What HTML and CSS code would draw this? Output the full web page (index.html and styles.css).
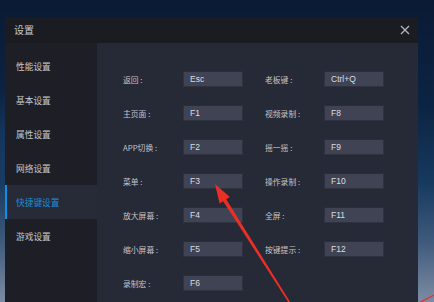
FILE: index.html
```html
<!DOCTYPE html>
<html lang="zh-CN">
<head>
<meta charset="utf-8">
<title>设置</title>
<link rel="stylesheet" href="styles.css">
</head>
<body>
<div class="dialog">
  <div class="titlebar">
    <span class="title">设置</span>
    <svg class="close" width="10" height="10" viewBox="0 0 10 10"><path d="M1 1L9 9M9 1L1 9" stroke="#b4b6bc" stroke-width="1.3" fill="none"/></svg>
  </div>
  <div class="body">
    <ul class="sidebar">
      <li class="nav">性能设置</li>
      <li class="nav">基本设置</li>
      <li class="nav">属性设置</li>
      <li class="nav">网络设置</li>
      <li class="nav active">快捷键设置</li>
      <li class="nav">游戏设置</li>
    </ul>
    <div class="content">
      <div class="col">
        <div class="row"><span class="label">返回 :</span><span class="key">Esc</span></div>
        <div class="row"><span class="label">主页面 :</span><span class="key">F1</span></div>
        <div class="row"><span class="label">APP切换 :</span><span class="key">F2</span></div>
        <div class="row"><span class="label">菜单 :</span><span class="key">F3</span></div>
        <div class="row"><span class="label">放大屏幕 :</span><span class="key">F4</span></div>
        <div class="row"><span class="label">缩小屏幕 :</span><span class="key">F5</span></div>
        <div class="row"><span class="label">录制宏 :</span><span class="key">F6</span></div>
      </div>
      <div class="col">
        <div class="row"><span class="label">老板键 :</span><span class="key">Ctrl+Q</span></div>
        <div class="row"><span class="label">视频录制 :</span><span class="key">F8</span></div>
        <div class="row"><span class="label">摇一摇 :</span><span class="key">F9</span></div>
        <div class="row"><span class="label">操作录制 :</span><span class="key">F10</span></div>
        <div class="row"><span class="label">全屏 :</span><span class="key">F11</span></div>
        <div class="row"><span class="label">按键提示 :</span><span class="key">F12</span></div>
      </div>
    </div>
  </div>
</div>
<svg class="arrow" width="434" height="302" viewBox="0 0 434 302">
  <polygon fill="#ea2f27" points="215,184 229.8,197 226.2,199.2 290.8,303 289.2,303.6 223.2,201.2 219.6,203.4"/>
  <polygon fill="#ea2f27" points="419,302 434,294.5 434,295.8 421,302.5"/>
</svg>
</body>
</html>
```
FILE: styles.css
```css
html, body {
  margin: 0;
  padding: 0;
}
body {
  width: 434px;
  height: 302px;
  overflow: hidden;
  position: relative;
  background:
    radial-gradient(circle at 30px 140px, rgba(40,90,150,0.35), transparent 60px),
    linear-gradient(180deg, #0a1a34 0%, #0c2443 35%, #16395e 60%, #3e5a7c 80%, #7d8ca4 100%);
  font-family: "Noto Sans CJK SC", "Noto Sans", sans-serif;
}
.dialog {
  margin: 17px 0 0 5px;
  width: 413px;
  height: 300px;
  display: flex;
  flex-direction: column;
}
.titlebar {
  height: 26px;
  flex: none;
  background: #1b1c21;
  display: flex;
  align-items: center;
  justify-content: space-between;
  padding: 0 8px 0 9px;
}
.title {
  color: #c9cacf;
  font-size: 10px;
  line-height: 12px;
}
.close {
  display: block;
}
.body {
  flex: 1;
  display: flex;
}
.sidebar {
  list-style: none;
  margin: 0;
  padding: 6px 0 0;
  width: 92px;
  background: #1e1f26;
}
.nav {
  height: 34px;
  display: flex;
  align-items: center;
  color: #c6c7cc;
  font-size: 8.7px;
  border-left: 2px solid transparent;
  box-sizing: border-box;
  padding-left: 9px;
}
.nav.active {
  background: #272a37;
  border-left-color: #0f8fe4;
  color: #1b8cd8;
}
.content {
  flex: 1;
  background: #262936;
  padding: 28px 0 0 26px;
  display: flex;
  gap: 22px;
}
.col {
  display: flex;
  flex-direction: column;
  gap: 18px;
}
.row {
  display: flex;
  align-items: center;
  height: 16px;
}
.label {
  width: 60px;
  color: #c3c4ca;
  font-size: 7.8px;
  white-space: nowrap;
}
.col + .col .label {
  width: 59px;
}
.key {
  width: 60px;
  height: 16px;
  box-sizing: border-box;
  background: #3f4354;
  border: 1px solid #30333f;
  border-top-color: #2a2d38;
  color: #dcdde2;
  font-family: "Liberation Sans", sans-serif;
  font-size: 8.5px;
  line-height: 14px;
  padding-left: 6px;
}
.arrow {
  position: absolute;
  left: 0;
  top: 0;
  pointer-events: none;
}
```
